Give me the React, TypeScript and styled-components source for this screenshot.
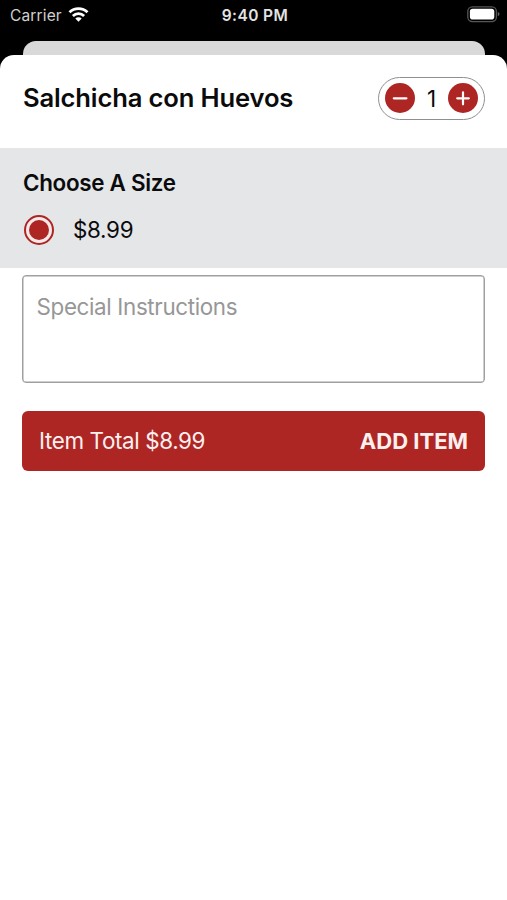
import React, { useState } from "react";
import styled, { createGlobalStyle } from "styled-components";

const red = "#ad2624";

const GlobalStyle = createGlobalStyle`
  * { box-sizing: border-box; }
  body { margin: 0; background: #000; font-family: Inter, "Liberation Sans", sans-serif; }
`;

const Screen = styled.main`
  display: flex;
  flex-direction: column;
  width: 507px;
  height: 900px;
  overflow: hidden;
  background: #000;
`;

const StatusBar = styled.header`
  display: grid;
  grid-template-columns: 1fr auto 1fr;
  align-items: center;
  height: 30px;
  flex: none;
  padding: 0 7px 0 10px;
  color: #e4e4e4;
`;

const Carrier = styled.div`
  display: flex;
  align-items: center;
  gap: 6px;
`;

const Label = styled.span<{ $size: number; $weight?: number; $spacing?: number; $color?: string }>`
  font-size: ${(p) => p.$size}px;
  font-weight: ${(p) => p.$weight ?? 400};
  letter-spacing: ${(p) => p.$spacing ?? 0}px;
  color: ${(p) => p.$color ?? "inherit"};
  line-height: 1.2;
  white-space: nowrap;
`;

const StatusLabel = styled(Label)`
  padding-top: 2px;
`;

const Wifi = styled.svg`
  display: block;
  margin-bottom: 1px;
`;

const Battery = styled.svg`
  display: block;
  justify-self: end;
  margin-bottom: 1px;
`;

const BackCard = styled.div`
  flex: none;
  height: 14px;
  margin: 11px 22px 0 23px;
  border-radius: 13px 13px 0 0;
  background: #d9d9d9;
`;

const Sheet = styled.section`
  flex: 1;
  border-radius: 14px 14px 0 0;
  background: #fff;
  color: #0b0b0c;
`;

const TitleRow = styled.div`
  display: flex;
  align-items: center;
  justify-content: space-between;
  height: 93px;
  padding: 0 22px 7px 23px;
`;

const Stepper = styled.div`
  display: flex;
  align-items: center;
  justify-content: space-between;
  width: 107px;
  height: 43px;
  padding: 0 6px;
  border: 1px solid #8f8f8f;
  border-radius: 22px;
`;

const RoundButton = styled.button`
  display: flex;
  width: 30px;
  height: 30px;
  padding: 0;
  border: 0;
  border-radius: 50%;
  background: ${red};
`;

const SizePanel = styled.div`
  height: 120px;
  padding: 22px 23px 0;
  background: #e4e6e8;
`;

const Option = styled.div`
  display: flex;
  align-items: center;
  gap: 19px;
  height: 30px;
  margin-top: 18px;
`;

const Price = styled(Label)`
  padding-top: 1px;
`;

const Radio = styled.span`
  display: flex;
  align-items: center;
  justify-content: center;
  width: 30px;
  height: 30px;
  margin-left: 1px;
  border: 2px solid ${red};
  border-radius: 50%;
  background: #f3e9e9;

  &::after {
    content: "";
    width: 20px;
    height: 20px;
    border-radius: 50%;
    background: ${red};
  }
`;

const Instructions = styled.textarea`
  display: block;
  width: 463px;
  height: 108px;
  margin: 7px 22px 0;
  padding: 17px 13.5px;
  border: 1px solid #a0a0a0;
  box-shadow: inset 0 0 0 0.5px #a0a0a0;
  border-radius: 4px;
  outline: none;
  resize: none;
  background: #fff;
  font: 400 22.4px/27px Inter, "Liberation Sans", sans-serif;
  letter-spacing: -0.35px;

  &::placeholder { color: #979797; opacity: 1; }
`;

const AddButton = styled.button`
  display: flex;
  align-items: center;
  justify-content: space-between;
  width: 463px;
  height: 60px;
  margin: 28px 22px 0;
  padding: 0 17px;
  border: 0;
  border-radius: 6px;
  background: ${red};
  color: #fdf0ef;
  font-family: inherit;
`;

const Sign = ({ plus }: { plus?: boolean }) => (
  <svg width="30" height="30" viewBox="0 0 30 30" fill="none" stroke="#fff" strokeWidth="2.2" strokeLinecap="round">
    <path d={plus ? "M9.2 15.3h11.6M15 9.3v12" : "M8.8 15.3h12.6"} />
  </svg>
);

export default function App() {
  const [count, setCount] = useState(1);
  const total = (8.99 * count).toFixed(2);
  return (
    <>
      <GlobalStyle />
      <Screen>
        <StatusBar>
          <Carrier>
            <StatusLabel $size={15.5} $spacing={0.15} $color="#d0d0d0">Carrier</StatusLabel>
            <Wifi width="21" height="15" viewBox="0 0 20 15" fill="none" stroke="#fff" strokeWidth="2.8">
              <path d="M1 5.2a12.9 12.9 0 0 1 18 0" />
              <path d="M4.4 8.9a8 8 0 0 1 11.2 0" />
              <path d="M10 14.7L6.8 11.5a4.6 4.6 0 0 1 6.4 0z" fill="#fff" stroke="none" />
            </Wifi>
          </Carrier>
          <StatusLabel $size={15.5} $weight={600} $spacing={0.4}>9:40 PM</StatusLabel>
          <Battery width="33" height="17" viewBox="0 0 33 17">
            <rect x="0.8" y="0.8" width="28.6" height="14.8" rx="4.5" fill="none" stroke="#555" strokeWidth="1.3" />
            <rect x="2.9" y="2.7" width="24.4" height="10.8" rx="2.8" fill="#fff" />
            <path d="M30.8 5.9q1.7.6 1.7 2.2t-1.7 2.2z" fill="#666" />
          </Battery>
        </StatusBar>
        <BackCard />
        <Sheet>
          <TitleRow>
            <Label $size={25.6} $weight={600} $spacing={-0.15}>Salchicha con Huevos</Label>
            <Stepper>
              <RoundButton aria-label="Decrease" onClick={() => setCount(Math.max(1, count - 1))}><Sign /></RoundButton>
              <Label $size={22.5}>{count}</Label>
              <RoundButton aria-label="Increase" onClick={() => setCount(count + 1)}><Sign plus /></RoundButton>
            </Stepper>
          </TitleRow>
          <SizePanel>
            <Label $size={22.4} $weight={600} $spacing={-0.3}>Choose A Size</Label>
            <Option>
              <Radio role="radio" aria-checked="true" />
              <Price $size={22.4} $spacing={-0.3}>$8.99</Price>
            </Option>
          </SizePanel>
          <Instructions placeholder="Special Instructions" />
          <AddButton>
            <Label $size={22.4} $spacing={-0.37}>Item Total ${total}</Label>
            <Label $size={22} $weight={700}>ADD ITEM</Label>
          </AddButton>
        </Sheet>
      </Screen>
    </>
  );
}
